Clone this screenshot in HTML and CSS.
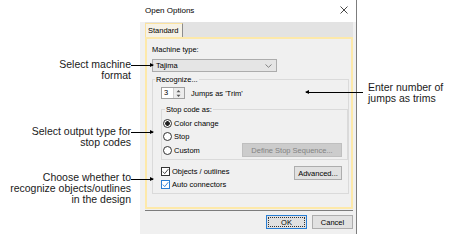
FILE: index.html
```html
<!DOCTYPE html>
<html>
<head>
  <title>Open Options</title>
  <link rel="stylesheet" href="styles.css">
</head>
<body>

<div class="stage">

  <!-- Dialog -->
  <div class="dialog">
    <div class="titlebar">
      <span>Open Options</span>
      <svg class="close" width="8" height="8" viewBox="0 0 8 8"><path d="M0.5 0.5 L7.5 7.5 M7.5 0.5 L0.5 7.5" stroke="#333" stroke-width="0.9" fill="none"/></svg>
    </div>

    <div class="dlg-body">
      <div class="tabs">
        <div class="tab">Standard</div>
      </div>

      <div class="panel">
        <div class="field-label">Machine type:</div>
        <div class="select">
          <span>Tajima</span>
          <svg width="7" height="4" viewBox="0 0 7 4"><path d="M0.5 0.5 L3.5 3.3 L6.5 0.5" stroke="#777" stroke-width="0.9" fill="none"/></svg>
        </div>

        <fieldset class="group outer">
          <legend>Recognize...</legend>
          <div class="group-body outer-body">
            <div class="spin-row">
              <div class="spin">
                <span class="spin-val">3</span>
                <span class="spin-btns">
                  <svg width="9" height="4" viewBox="0 0 9 4"><path d="M2.5 3.2 L4.5 1 L6.5 3.2 Z" fill="#555"/></svg>
                  <svg width="9" height="4" viewBox="0 0 9 4"><path d="M2.5 0.8 L4.5 3 L6.5 0.8 Z" fill="#555"/></svg>
                </span>
              </div>
              <span>Jumps as 'Trim'</span>
            </div>

            <fieldset class="group inner">
              <legend>Stop code as:</legend>
              <div class="group-body inner-body">
                <div class="opt-row"><span class="radio on"></span>Color change</div>
                <div class="opt-row"><span class="radio"></span>Stop</div>
                <div class="opt-row custom-row">
                  <span class="opt"><span class="radio"></span>Custom</span>
                  <div class="btn disabled define">Define Stop Sequence...</div>
                </div>
              </div>
            </fieldset>

            <div class="checks-row">
              <div class="checks">
                <div class="opt-row">
                  <span class="check"><svg width="7" height="7" viewBox="0 0 7 7"><path d="M0.8 3.6 L2.7 5.6 L6.3 1.2" stroke="#333" stroke-width="0.9" fill="none"/></svg></span>Objects / outlines
                </div>
                <div class="opt-row">
                  <span class="check focus"><svg width="7" height="7" viewBox="0 0 7 7"><path d="M0.8 3.6 L2.7 5.6 L6.3 1.2" stroke="#2a7fd4" stroke-width="0.9" fill="none"/></svg></span>Auto connectors
                </div>
              </div>
              <div class="btn advanced">Advanced...</div>
            </div>
          </div>
        </fieldset>
      </div>

      <div class="actions">
        <div class="btn default"><span>OK</span></div>
        <div class="btn">Cancel</div>
      </div>
    </div>
  </div>

  <!-- Callouts -->
  <div class="callout left c1">
    <div class="callout-text">Select machine<br>format</div>
    <div class="leader to-right"></div>
  </div>
  <div class="callout left c2">
    <div class="callout-text">Select output type for<br>stop codes</div>
    <div class="leader to-right"></div>
  </div>
  <div class="callout left c3">
    <div class="callout-text">Choose whether to<br>recognize objects/outlines<br>in the design</div>
    <div class="leader to-right"></div>
  </div>
  <div class="callout right c4">
    <div class="leader to-left"></div>
    <div class="callout-text">Enter number of<br>jumps as trims</div>
  </div>

</div>

</body>
</html>
```

FILE: styles.css
```css
body {
  margin: 0;
  background: #fff;
  font-family: "Liberation Sans", Arial, sans-serif;
}

.stage {
  position: relative;
  width: 457px;
  height: 249px;
}

/* Dialog window */
.dialog {
  margin-left: 140px;
  width: 217px;
  height: 234px;
  box-sizing: border-box;
  border-right: 1px solid #7d7d7d;
  background: #f0f0f0;
  display: flex;
  flex-direction: column;
  font-size: 7.5px;
  line-height: 9px;
  color: #000;
}

.titlebar {
  height: 22px;
  box-sizing: border-box;
  background: #fff;
  display: flex;
  align-items: center;
  justify-content: space-between;
  padding: 0 8px 2px 5px;
  font-size: 8px;
}

.dlg-body {
  flex: 1;
  display: flex;
  flex-direction: column;
  padding: 0 3px 0 5px;
}

.tabs {
  height: 15px;
  background: #e3e3e3;
  display: flex;
  align-items: flex-end;
}

.tab {
  width: 38px;
  height: 14px;
  box-sizing: border-box;
  border-left: 1px solid #fbe3a0;
  border-top: 1px solid #fbe3a0;
  border-right: 1px solid #8d8d8d;
  background: #f6f2e6;
  padding-left: 2px;
  line-height: 13px;
}

.panel {
  height: 172px;
  box-sizing: border-box;
  border: 2px solid #fde9aa;
  background: #f0f0f0;
  padding: 6px 2px 0 5px;
  box-shadow: 0 1px 0 #f0f0f0, 0 2px 0 #7c7c7c;
}

.field-label {
  height: 9px;
  margin-bottom: 5px;
}

.select {
  width: 125px;
  height: 13px;
  box-sizing: border-box;
  border: 1px solid #acacac;
  background: #e5e5e5;
  display: flex;
  align-items: center;
  justify-content: space-between;
  padding: 0 4px 0 3px;
}

/* Group boxes */
.group {
  margin: 0;
  padding: 0;
  border: 1px solid #dadada;
  min-width: 0;
}

.group legend {
  padding: 0 1px;
  height: 9px;
  line-height: 9px;
}

.group.outer {
  margin-top: 3px;
}

.outer legend {
  margin-left: 2px;
}

.outer-body {
  padding: 3px 0 2px 8px;
}

.spin-row {
  height: 12px;
  display: flex;
  align-items: center;
  gap: 6px;
}

.spin {
  width: 24px;
  height: 12px;
  box-sizing: border-box;
  border: 1px solid #a0a0a0;
  background: #fff;
  display: flex;
}

.spin-val {
  flex: 1;
  padding-left: 2px;
  line-height: 10px;
}

.spin-btns {
  width: 10px;
  border-left: 1px solid #d0d0d0;
  background: #ececec;
  display: flex;
  flex-direction: column;
  justify-content: space-around;
}

.spin-btns svg {
  display: block;
}

.group.inner {
  margin-top: 6px;
}

.inner legend {
  margin-left: 3px;
}

.inner-body {
  padding: 3px 5px 2px 1px;
}

.opt-row {
  height: 13px;
  display: flex;
  align-items: center;
  gap: 2px;
}

.opt {
  display: flex;
  align-items: center;
  gap: 2px;
}

.custom-row {
  height: 14px;
  justify-content: space-between;
}

.radio {
  width: 9px;
  height: 9px;
  box-sizing: border-box;
  border: 1px solid #333;
  border-radius: 50%;
  background: #fff;
}

.radio.on {
  background: radial-gradient(circle, #222 0 2px, #fff 2.6px);
}

.check {
  width: 9px;
  height: 9px;
  box-sizing: border-box;
  border: 1px solid #333;
  background: #fff;
  display: flex;
  align-items: center;
  justify-content: center;
}

.check.focus {
  border-color: #2a7fd4;
}

.checks-row {
  margin-top: 5px;
  display: flex;
  justify-content: space-between;
  align-items: flex-start;
}

/* Buttons */
.btn {
  height: 14px;
  box-sizing: border-box;
  border: 1px solid #adadad;
  background: #e1e1e1;
  display: flex;
  align-items: center;
  justify-content: center;
}

.btn.disabled {
  background: #cccccc;
  border-color: #bfbfbf;
  color: #838383;
}

.define {
  width: 100px;
}

.advanced {
  width: 48px;
  margin: 1px 6px 0 0;
}

.actions {
  margin-top: 6px;
  display: flex;
  justify-content: flex-end;
  gap: 5px;
}

.actions .btn {
  width: 41px;
}

.btn.default {
  border-color: #2a7fd4;
  padding: 1px;
}

.btn.default span {
  flex: 1;
  align-self: stretch;
  display: flex;
  align-items: center;
  justify-content: center;
  border: 1px dotted #333;
}

/* Callouts */
.callout {
  position: absolute;
  display: flex;
  align-items: flex-start;
  font-size: 10.5px;
  line-height: 11px;
  color: #1a1a1a;
}

.callout-text {
  white-space: nowrap;
}

.callout.left {
  right: 304px;
}

.callout.left .callout-text {
  text-align: right;
}

.leader {
  position: relative;
  height: 1px;
  background: #000;
}

.to-right {
  width: 22px;
  margin-top: 6px;
}

.to-right::after {
  content: "";
  position: absolute;
  right: -1px;
  top: -2px;
  border-left: 4px solid #000;
  border-top: 2.5px solid transparent;
  border-bottom: 2.5px solid transparent;
}

.to-left {
  width: 57px;
  margin: 10px 5px 0 0;
}

.to-left::before {
  content: "";
  position: absolute;
  left: -1px;
  top: -2px;
  border-right: 4px solid #000;
  border-top: 2.5px solid transparent;
  border-bottom: 2.5px solid transparent;
}

.c1 { top: 59px; }
.c2 { top: 126px; }
.c3 { top: 172px; }
.c3 .to-right { margin-top: 7px; }
.c4 { top: 82px; left: 306px; }
```
